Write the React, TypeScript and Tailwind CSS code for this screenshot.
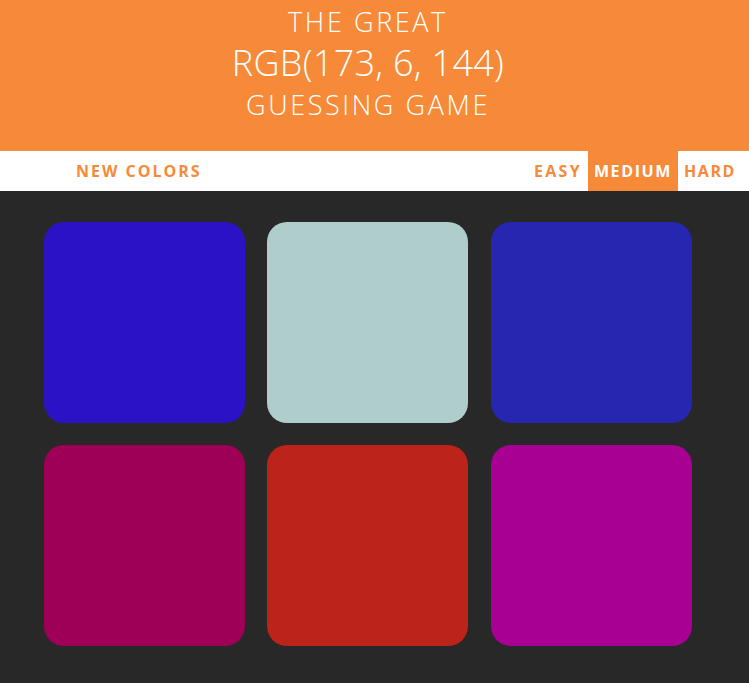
import React from 'react';

const squares = ['#2b12c4', '#aecdcb', '#2726b0', '#9e0058', '#bb231b', '#a80092'];

const App: React.FC = () => {
    return (
        <div className="min-h-[683px] bg-[#282828]" style={{ fontFamily: '"Open Sans", "Liberation Sans", sans-serif' }}>
            <header className="h-[151px] bg-[#f68a38] text-white text-center flex flex-col items-center pt-[4px] pr-[13px]">
                <div className="text-[27px] leading-[36px] tracking-[2.6px] font-light">THE GREAT</div>
                <div className="text-[36px] leading-[46px] tracking-[0.3px] font-light">RGB(173, 6, 144)</div>
                <div className="text-[27px] leading-[38px] tracking-[2.6px] font-light">GUESSING GAME</div>
            </header>
            <nav className="h-[40px] bg-white flex items-stretch text-[16px] font-bold text-[#f68a38] tracking-[1.6px]">
                <button className="ml-[70px] px-[6px] uppercase tracking-[2px]">New Colors</button>
                <div className="ml-auto mr-[7px] flex items-stretch">
                    <button className="px-[6px] tracking-[2.3px]">EASY</button>
                    <button className="px-[6px] bg-[#f68a38] text-white">MEDIUM</button>
                    <button className="px-[6px]">HARD</button>
                </div>
            </nav>
            <main className="pt-[31px] pl-[44px] grid grid-cols-[201px_201px_202px] justify-items-end gap-x-[22px] gap-y-[22px]">
                {squares.map((c) => (
                    <div key={c} className="w-[201px] h-[201px] rounded-[20px]" style={{ backgroundColor: c }} />
                ))}
            </main>
        </div>
    );
};

export default App;
